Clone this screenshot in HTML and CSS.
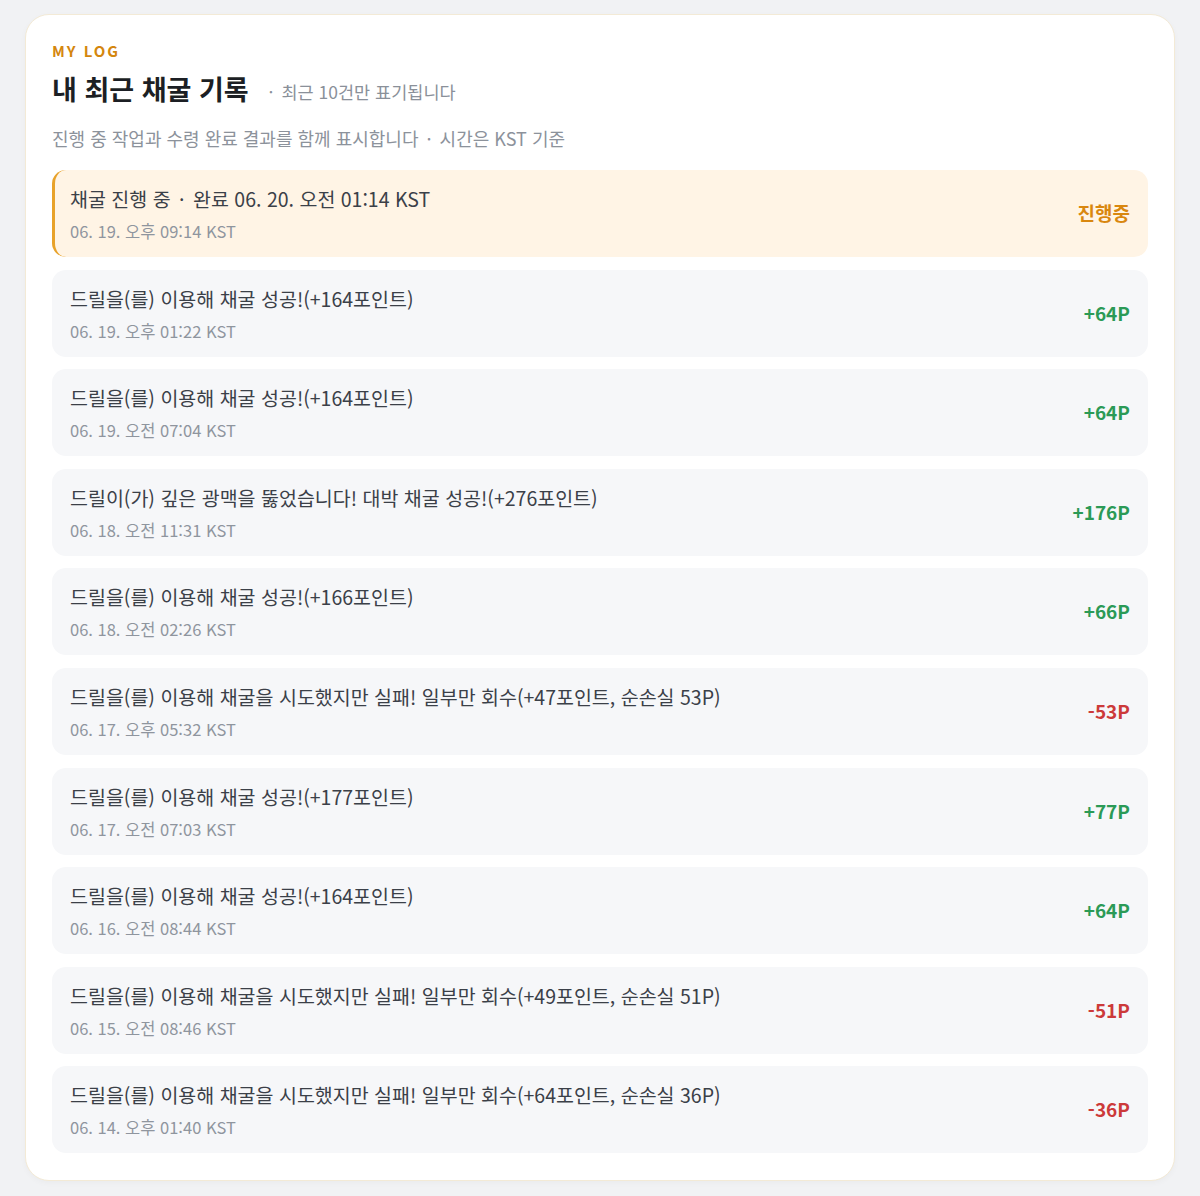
FILE: index.html
```html
<!DOCTYPE html>
<html lang="ko">
<head>
<meta charset="utf-8">
<title>MY LOG</title>
<link rel="stylesheet" href="styles.css">
</head>
<body>
<section class="card">
  <div class="eyebrow">MY LOG</div>
  <div class="head">
    <h1 class="title">내 최근 채굴 기록</h1>
    <span class="note"><span class="dot">·</span>최근 10건만 표기됩니다</span>
  </div>
  <p class="desc">진행 중 작업과 수령 완료 결과를 함께 표시합니다 <span class="dot">·</span> 시간은 KST 기준</p>
  <ul class="list">
    <li class="row pending">
      <div class="info"><div class="msg">채굴 진행 중 <span class="dot">·</span> 완료 06. 20. 오전 01:14 KST</div><div class="time">06. 19. 오후 09:14 KST</div></div>
      <div class="amt orange">진행중</div>
    </li>
    <li class="row">
      <div class="info"><div class="msg">드릴을(를) 이용해 채굴 성공!(+164포인트)</div><div class="time">06. 19. 오후 01:22 KST</div></div>
      <div class="amt green">+64P</div>
    </li>
    <li class="row">
      <div class="info"><div class="msg">드릴을(를) 이용해 채굴 성공!(+164포인트)</div><div class="time">06. 19. 오전 07:04 KST</div></div>
      <div class="amt green">+64P</div>
    </li>
    <li class="row">
      <div class="info"><div class="msg">드릴이(가) 깊은 광맥을 뚫었습니다! 대박 채굴 성공!(+276포인트)</div><div class="time">06. 18. 오전 11:31 KST</div></div>
      <div class="amt green">+176P</div>
    </li>
    <li class="row">
      <div class="info"><div class="msg">드릴을(를) 이용해 채굴 성공!(+166포인트)</div><div class="time">06. 18. 오전 02:26 KST</div></div>
      <div class="amt green">+66P</div>
    </li>
    <li class="row">
      <div class="info"><div class="msg">드릴을(를) 이용해 채굴을 시도했지만 실패! 일부만 회수(+47포인트, 순손실 53P)</div><div class="time">06. 17. 오후 05:32 KST</div></div>
      <div class="amt red">-53P</div>
    </li>
    <li class="row">
      <div class="info"><div class="msg">드릴을(를) 이용해 채굴 성공!(+177포인트)</div><div class="time">06. 17. 오전 07:03 KST</div></div>
      <div class="amt green">+77P</div>
    </li>
    <li class="row">
      <div class="info"><div class="msg">드릴을(를) 이용해 채굴 성공!(+164포인트)</div><div class="time">06. 16. 오전 08:44 KST</div></div>
      <div class="amt green">+64P</div>
    </li>
    <li class="row">
      <div class="info"><div class="msg">드릴을(를) 이용해 채굴을 시도했지만 실패! 일부만 회수(+49포인트, 순손실 51P)</div><div class="time">06. 15. 오전 08:46 KST</div></div>
      <div class="amt red">-51P</div>
    </li>
    <li class="row">
      <div class="info"><div class="msg">드릴을(를) 이용해 채굴을 시도했지만 실패! 일부만 회수(+64포인트, 순손실 36P)</div><div class="time">06. 14. 오후 01:40 KST</div></div>
      <div class="amt red">-36P</div>
    </li>
  </ul>
</section>
</body>
</html>
```

FILE: styles.css
```css
* { box-sizing: border-box; }
html, body { margin: 0; padding: 0; }
body {
  background: #f1f2f4;
  font-family: "Noto Sans CJK KR", "Noto Sans", sans-serif;
  padding: 14px 25px 16px 25px;
}
.card {
  background: #ffffff;
  border: 1px solid #f3ead6;
  border-radius: 24px;
  padding: 28px 26px 27px 26px;
  box-shadow: 0 2px 6px rgba(0,0,0,0.03);
}
.eyebrow {
  font-size: 15px;
  line-height: 16px;
  font-weight: 700;
  letter-spacing: 2px;
  color: #d4860e;
}
.head {
  display: flex;
  align-items: center;
  gap: 20px;
  margin-top: 14px;
  height: 32px;
}
.title {
  margin: 0;
  font-size: 27px;
  line-height: 32px;
  font-weight: 700;
  color: #1c1f24;
}
.note {
  font-size: 17.5px;
  color: #8a9099;
  margin-top: 4px;
}
.note .dot { margin: 0 8px 0 0; }
.dot { margin: 0 3px; }
.desc {
  margin: 22px 0 0 0;
  font-size: 18px;
  line-height: 22px;
  color: #8c929b;
}
.list {
  list-style: none;
  margin: 21px 0 0 0;
  padding: 0;
  display: flex;
  flex-direction: column;
  gap: 12.6px;
}
.row {
  display: flex;
  align-items: center;
  justify-content: space-between;
  background: #f6f7f9;
  border-radius: 14px;
  padding: 0 18px;
  height: 87px;
}
.row.pending {
  background: #fff4e5;
  border-left: 3px solid #e8a22a;
  padding-left: 15px;
}
.msg {
  font-size: 19.5px;
  line-height: 26px;
  color: #3b4048;
}
.time {
  margin-top: 9px;
  font-size: 16.5px;
  line-height: 20px;
  color: #8f959e;
}
.amt {
  font-size: 19px;
  font-weight: 700;
  margin-top: -2px;
}
.green { color: #2b9a56; }
.red { color: #cc3a3a; }
.orange { color: #d9870f; }
```
